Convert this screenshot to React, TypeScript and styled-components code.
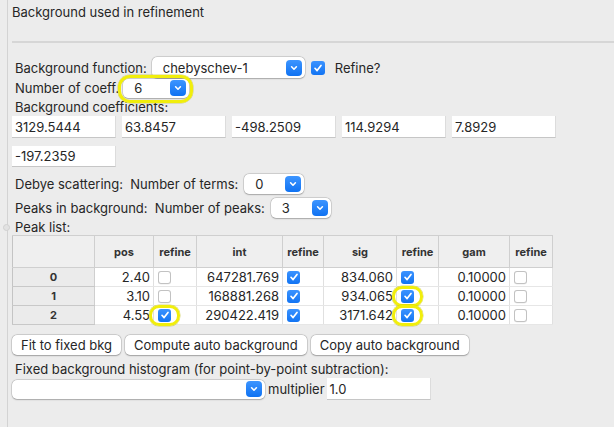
import React from "react";
import styled, { createGlobalStyle } from "styled-components";

const GlobalStyle = createGlobalStyle`
  html, body { margin: 0; padding: 0; background: #ececec; }
  body {
    font-family: Inter, "Liberation Sans", "Noto Sans", sans-serif;
    font-size: 13px;
    color: #262626;
  }
  * { box-sizing: border-box; }
`;

const Page = styled.div`
  display: flex;
  width: 614px;
  height: 427px;
  overflow: hidden;
  background: #ececec;
`;

const Edge = styled.div`
  position: relative;
  width: 8px;
  flex-shrink: 0;
  border-right: 1px solid #d3d3d3;
`;

const SashDot = styled.span`
  position: absolute;
  left: 3px;
  top: 224px;
  width: 7px;
  height: 7px;
  border-radius: 50%;
  background: #e2e2e2;
  border: 1px solid #d0d0d0;
`;

const Main = styled.div`
  flex: 1;
  padding-left: 4px;
  display: flex;
  flex-direction: column;
`;

const Title = styled.div`
  padding-top: 4px;
  line-height: 16px;
  height: 20px;
`;

const Separator = styled.div`
  margin-top: 21px;
  border-top: 2px solid #d6d6d6;
`;

const Row = styled.div<{ $h: number; $mt?: number; $gap?: number }>`
  display: flex;
  align-items: center;
  height: ${(p) => p.$h}px;
  margin-top: ${(p) => p.$mt ?? 0}px;
  gap: ${(p) => p.$gap ?? 0}px;
  white-space: nowrap;
`;

const Label = styled.span<{ $ml?: number; $mr?: number }>`
  margin-left: ${(p) => p.$ml ?? 3}px;
  margin-right: ${(p) => p.$mr ?? 0}px;
  line-height: 16px;
`;

const SelectBox = styled.div<{ $w: number; $h?: number }>`
  position: relative;
  display: flex;
  align-items: center;
  width: ${(p) => p.$w}px;
  height: ${(p) => p.$h ?? 20}px;
  background: #fff;
  border-radius: 5px;
  box-shadow: 0 0 0 0.5px rgba(0, 0, 0, 0.18), 0 0.5px 1.5px rgba(0, 0, 0, 0.22);
  padding-left: 11px;
  padding-right: 3px;
`;

const SelectValue = styled.span`
  flex: 1;
`;

const ChevronBtn = styled.span`
  width: 16px;
  height: 16px;
  border-radius: 4px;
  background: linear-gradient(#3d95ff, #0f72f2);
  display: flex;
  align-items: center;
  justify-content: center;
`;

const Select = ({ value, w, h }: { value: string; w: number; h?: number }) => (
  <SelectBox $w={w} $h={h}>
    <SelectValue>{value}</SelectValue>
    <ChevronBtn>
      <svg width="10" height="10" viewBox="0 0 10 10">
        <path d="M2.6 3.8 L5 6.2 L7.4 3.8" fill="none" stroke="#fff" strokeWidth="1.6" strokeLinecap="round" strokeLinejoin="round" />
      </svg>
    </ChevronBtn>
  </SelectBox>
);

const CheckBox = styled.span<{ $checked: boolean; $size?: number }>`
  display: inline-flex;
  align-items: center;
  justify-content: center;
  width: ${(p) => p.$size ?? 13}px;
  height: ${(p) => p.$size ?? 13}px;
  border-radius: 3px;
  flex-shrink: 0;
  background: ${(p) => (p.$checked ? "linear-gradient(#3b93ff, #1274f3)" : "#fff")};
  box-shadow: ${(p) =>
    p.$checked ? "none" : "inset 0 0 0 1px #c2c2c2, 0 0.5px 0.5px rgba(0,0,0,0.08)"};
`;

const Check = ({ checked, size }: { checked: boolean; size?: number }) => (
  <CheckBox $checked={checked} $size={size}>
    {checked && (
      <svg width="10" height="10" viewBox="0 0 10 10">
        <path d="M2 5.3 L4.1 7.6 L8 2.4" fill="none" stroke="#fff" strokeWidth="1.7" strokeLinecap="round" strokeLinejoin="round" />
      </svg>
    )}
  </CheckBox>
);

const Highlight = styled.span<{ $t: number; $r: number; $b: number; $l: number; $rad?: number }>`
  position: relative;
  display: inline-flex;
  &::after {
    content: "";
    position: absolute;
    top: ${(p) => -p.$t}px;
    right: ${(p) => -p.$r}px;
    bottom: ${(p) => -p.$b}px;
    left: ${(p) => -p.$l}px;
    border: 3px solid #f1ee0c;
    border-radius: ${(p) => p.$rad ?? 10}px;
    box-shadow: 0 0 0 0.5px rgba(180, 175, 0, 0.5);
    pointer-events: none;
    z-index: 2;
  }
`;

const TextField = styled.div<{ $w?: number; $h?: number }>`
  width: ${(p) => p.$w ?? 104}px;
  height: ${(p) => p.$h ?? 22}px;
  background: #fff;
  border-bottom: 1px solid #c6c6c6;
  border-right: 1px solid #dcdcdc;
  display: flex;
  align-items: center;
  padding-left: 3px;
`;

const Table = styled.table`
  border-collapse: collapse;
  table-layout: fixed;
  width: 541px;
  margin-left: 0;
  border-left: 1px solid #c4c4c4;
`;

const HeadCell = styled.th<{ $w: number }>`
  width: ${(p) => p.$w}px;
  height: 32px;
  padding: 0;
  background: #efefef;
  border: 1px solid #cfcfcf;
  border-left: none;
  font-size: 11px;
  font-weight: 700;
  color: #333;
  text-align: center;
`;

const RowHead = styled.td`
  height: 19px;
  padding: 0;
  background: #ebebeb;
  border-right: 1px solid #cfcfcf;
  border-bottom: 1px solid #c8c8c8;
  font-size: 11px;
  font-weight: 700;
  text-align: center;
  color: #333;
`;

const NumCell = styled.td`
  height: 19px;
  padding: 0 3px 0 0;
  background: #fff;
  border-right: 1px solid #e0e0e0;
  border-bottom: 1px solid #e6e6e6;
  text-align: right;
  line-height: 18px;
`;

const BoxCell = styled.td`
  height: 19px;
  padding: 0 0 0 4px;
  background: #fff;
  border-right: 1px solid #e0e0e0;
  border-bottom: 1px solid #e6e6e6;
  vertical-align: middle;
  line-height: 0;
`;

const Button = styled.button`
  height: 20px;
  padding: 0 9px;
  background: #fff;
  border: none;
  border-radius: 5px;
  box-shadow: 0 0 0 0.5px rgba(0, 0, 0, 0.18), 0 0.5px 1.5px rgba(0, 0, 0, 0.25);
  font-family: inherit;
  font-size: 13px;
  color: #262626;
  white-space: nowrap;
`;

type Peak = {
  pos: string; pr: boolean; int: string; ir: boolean;
  sig: string; sr: boolean; gam: string; gr: boolean;
  hlPos?: boolean; hlSig?: boolean;
};

const peaks: Peak[] = [
  { pos: "2.40", pr: false, int: "647281.769", ir: true, sig: "834.060", sr: true, gam: "0.10000", gr: false },
  { pos: "3.10", pr: false, int: "168881.268", ir: true, sig: "934.065", sr: true, gam: "0.10000", gr: false, hlSig: true },
  { pos: "4.55", pr: true, int: "290422.419", ir: true, sig: "3171.642", sr: true, gam: "0.10000", gr: false, hlPos: true, hlSig: true },
];

const cols: [string, number][] = [
  ["", 82], ["pos", 59], ["refine", 43], ["int", 86], ["refine", 41],
  ["sig", 73], ["refine", 42], ["gam", 71], ["refine", 43],
];

const HL = ({ on, children }: { on?: boolean; children: React.ReactNode }) =>
  on ? (
    <Highlight $t={4} $b={4} $l={9} $r={9} $rad={10}>
      {children}
    </Highlight>
  ) : (
    <>{children}</>
  );

export default function App() {
  return (
    <>
      <GlobalStyle />
      <Page>
        <Edge>
          <SashDot />
        </Edge>
        <Main>
          <Title>Background used in refinement</Title>
          <Separator />

          <Row $h={21} $mt={14}>
            <Label $mr={5}>Background function:</Label>
            <Select value="chebyschev-1" w={153} h={21} />
            <span style={{ width: 6 }} />
            <Check checked size={14} />
            <Label $ml={10}>Refine?</Label>
          </Row>

          <Row $h={20}>
            <Label $mr={4}>Number of coeff.</Label>
            <Highlight $t={4} $b={5} $l={5} $r={4} $rad={12}>
              <Select value="6" w={66} h={19} />
            </Highlight>
          </Row>

          <Row $h={18}>
            <Label>Background coefficients:</Label>
          </Row>

          <Row $h={22} $gap={6}>
            <TextField>3129.5444</TextField>
            <TextField>63.8457</TextField>
            <TextField>-498.2509</TextField>
            <TextField>114.9294</TextField>
            <TextField>7.8929</TextField>
          </Row>

          <Row $h={21} $mt={8}>
            <TextField $h={21}>-197.2359</TextField>
          </Row>

          <Row $h={22} $mt={6}>
            <Label $mr={6}>Debye scattering:&nbsp; Number of terms:</Label>
            <Select value="0" w={60} h={20} />
          </Row>

          <Row $h={22} $mt={2}>
            <Label $mr={6}>Peaks in background:&nbsp; Number of peaks:</Label>
            <Select value="3" w={60} h={20} />
          </Row>

          <Row $h={16}>
            <Label>Peak list:</Label>
          </Row>

          <Table>
            <thead>
              <tr>
                {cols.map(([name, w], i) => (
                  <HeadCell key={i} $w={w}>
                    {name}
                  </HeadCell>
                ))}
              </tr>
            </thead>
            <tbody>
              {peaks.map((p, i) => (
                <tr key={i}>
                  <RowHead>{i}</RowHead>
                  <NumCell>{p.pos}</NumCell>
                  <BoxCell>
                    <HL on={p.hlPos}>
                      <Check checked={p.pr} />
                    </HL>
                  </BoxCell>
                  <NumCell>{p.int}</NumCell>
                  <BoxCell>
                    <Check checked={p.ir} />
                  </BoxCell>
                  <NumCell>{p.sig}</NumCell>
                  <BoxCell>
                    <HL on={p.hlSig}>
                      <Check checked={p.sr} />
                    </HL>
                  </BoxCell>
                  <NumCell>{p.gam}</NumCell>
                  <BoxCell>
                    <Check checked={p.gr} />
                  </BoxCell>
                </tr>
              ))}
            </tbody>
          </Table>

          <Row $h={20} $mt={10} $gap={4}>
            <Button>Fit to fixed bkg</Button>
            <Button>Compute auto background</Button>
            <Button>Copy auto background</Button>
          </Row>

          <Row $h={16} $mt={6}>
            <Label>Fixed background histogram (for point-by-point subtraction):</Label>
          </Row>

          <Row $h={22} $mt={1}>
            <Select value="" w={253} h={19} />
            <Label $ml={3} $mr={2}>multiplier</Label>
            <TextField $w={104} $h={22}>1.0</TextField>
          </Row>
        </Main>
      </Page>
    </>
  );
}
